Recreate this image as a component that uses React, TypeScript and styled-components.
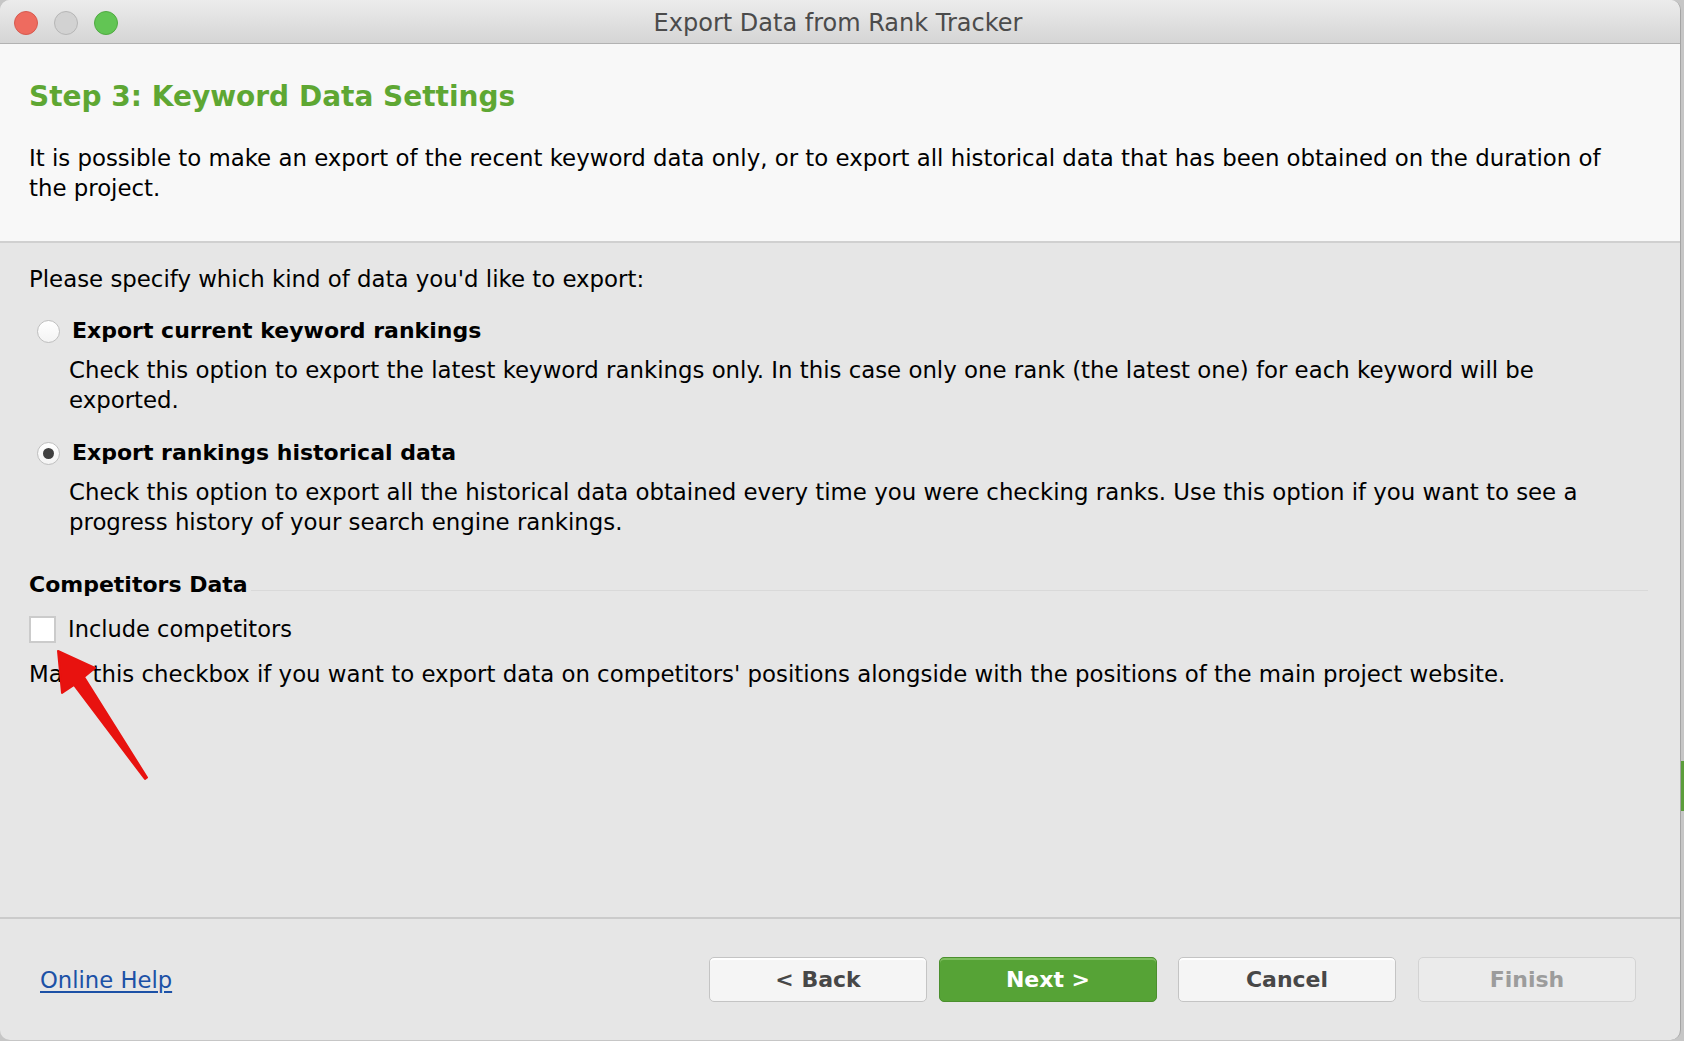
import React from "react";
import styled, { createGlobalStyle } from "styled-components";

const Global = createGlobalStyle`
  html, body { margin: 0; padding: 0; }
  body {
    width: 1684px;
    height: 1041px;
    overflow: hidden;
    background: linear-gradient(to bottom, #c6c6c6 0, #c6c6c6 761px, #5b9d3b 761px, #5b9d3b 811px, #c6c6c6 811px);
    font-family: "DejaVu Sans", "Noto Sans", sans-serif;
    color: #000;
  }
`;

const Window = styled.div`
  position: relative;
  box-sizing: border-box;
  width: 1681px;
  height: 1040px;
  display: flex;
  flex-direction: column;
  border-radius: 10px;
  overflow: hidden;
  background: #e6e6e6;
  border-right: 1px solid #a4a4a4;
`;

const TitleBar = styled.div`
  box-sizing: border-box;
  height: 44px;
  flex: none;
  display: grid;
  grid-template-columns: 1fr auto 1fr;
  align-items: center;
  background: linear-gradient(to bottom, #ececec, #d5d5d5);
  border-bottom: 1px solid #b2b2b2;
`;

const Lights = styled.div`
  display: flex;
  gap: 16px;
  padding: 2px 0 0 14px;
`;

const Light = styled.span<{ $fill: string; $edge: string }>`
  width: 24px;
  height: 24px;
  box-sizing: border-box;
  border-radius: 50%;
  background: ${(p) => p.$fill};
  border: 1px solid ${(p) => p.$edge};
`;

const WindowTitle = styled.div`
  font-size: 24px;
  color: #4b4b4b;
  white-space: nowrap;
  margin: 3px 4px 0 0;
`;

const Header = styled.div`
  flex: none;
  box-sizing: border-box;
  height: 199px;
  padding: 33px 51px 0 29px;
  background: #f8f8f8;
  border-bottom: 2px solid #d0d0d0;
`;

const Heading = styled.h1`
  margin: 0;
  font-size: 28px;
  line-height: 40px;
  font-weight: bold;
  color: #5ea733;
`;

const Para = styled.p<{ $indent?: number; $top?: number }>`
  margin: ${(p) => p.$top ?? 0}px 0 0 ${(p) => p.$indent ?? 0}px;
  font-size: 22.85px;
  line-height: 30px;
  color: #000;
`;

const Content = styled.div`
  flex: 1;
  padding: 21px 51px 0 29px;
`;

const OptionRow = styled.label<{ $top: number }>`
  display: flex;
  align-items: center;
  gap: 12px;
  height: 30px;
  margin: ${(p) => p.$top}px 0 0 8px;
`;

const Radio = styled.span<{ $on?: boolean }>`
  box-sizing: border-box;
  width: 23px;
  height: 23px;
  border-radius: 50%;
  background: linear-gradient(to bottom, #ffffff, #f4f4f4);
  border: 1px solid #bfbfbf;
  display: flex;
  align-items: center;
  justify-content: center;
  &::after {
    content: "";
    display: ${(p) => (p.$on ? "block" : "none")};
    width: 11px;
    height: 11px;
    border-radius: 50%;
    background: #404040;
  }
`;

const OptionLabel = styled.span`
  font-size: 22px;
  line-height: 30px;
  font-weight: bold;
`;

const SectionRow = styled.div`
  display: flex;
  align-items: center;
  height: 30px;
  margin-top: 32px;
`;

const SectionTitle = styled.span`
  font-size: 22px;
  font-weight: bold;
  white-space: nowrap;
`;

const SectionRule = styled.span`
  flex: none;
  width: 1397px;
  height: 1px;
  margin: 12px 0 0 3px;
  background: #d9d9d9;
`;

const CheckRow = styled.label`
  display: flex;
  align-items: center;
  gap: 12px;
  height: 30px;
  margin-top: 15px;
`;

const CheckBox = styled.span`
  box-sizing: border-box;
  width: 27px;
  height: 27px;
  background: #fff;
  border: 2px solid #cbcbcb;
`;

const CheckLabel = styled.span`
  font-size: 22.5px;
`;

const Footer = styled.div`
  flex: none;
  box-sizing: border-box;
  height: 123px;
  border-top: 2px solid #cbcbcb;
  display: flex;
  align-items: center;
  padding: 0 44px 0 40px;
`;

const HelpLink = styled.a`
  font-size: 22.7px;
  color: #1c51a6;
  text-decoration: underline;
  text-underline-offset: 3px;
  cursor: pointer;
`;

const Buttons = styled.div`
  margin-left: auto;
  display: flex;
`;

type Kind = "plain" | "primary" | "disabled";

const Button = styled.button<{ $kind: Kind; $gap?: number }>`
  box-sizing: border-box;
  width: 218px;
  height: 45px;
  margin-left: ${(p) => p.$gap ?? 0}px;
  border-radius: 5px;
  font-family: "DejaVu Sans", sans-serif;
  font-size: 22px;
  font-weight: bold;
  cursor: pointer;
  ${(p) =>
    p.$kind === "primary"
      ? `background: #56a336; color: #fff; border: 1px solid #4b8f2e; box-shadow: inset 0 2px 0 #7fbf60;`
      : p.$kind === "disabled"
      ? `background: #ebebeb; color: #9c9c9c; border: 1px solid #d3d3d3;`
      : `background: #f5f5f5; color: #474747; border: 1px solid #c4c4c4; box-shadow: inset 0 2px 0 #ffffff;`}
`;

const Overlay = styled.svg`
  position: absolute;
  left: 0;
  top: 0;
  width: 1680px;
  height: 1040px;
  pointer-events: none;
`;

export default function App() {
  return (
    <>
      <Global />
      <Window>
        <TitleBar>
          <Lights>
            <Light $fill="#ee6b5f" $edge="#d65a4f" />
            <Light $fill="#d2d2d2" $edge="#b6b6b6" />
            <Light $fill="#62c554" $edge="#50aa42" />
          </Lights>
          <WindowTitle>Export Data from Rank Tracker</WindowTitle>
          <span />
        </TitleBar>

        <Header>
          <Heading>Step 3: Keyword Data Settings</Heading>
          <Para $top={26}>
            It is possible to make an export of the recent keyword data only, or to export all historical data that
            has been obtained on the duration of the project.
          </Para>
        </Header>

        <Content>
          <Para>Please specify which kind of data you'd like to export:</Para>

          <OptionRow $top={22}>
            <Radio />
            <OptionLabel>Export current keyword rankings</OptionLabel>
          </OptionRow>
          <Para $indent={40} $top={9}>
            Check this option to export the latest keyword rankings only. In this case only one rank (the latest one)
            for each keyword will be exported.
          </Para>

          <OptionRow $top={23}>
            <Radio $on />
            <OptionLabel>Export rankings historical data</OptionLabel>
          </OptionRow>
          <Para $indent={40} $top={9}>
            Check this option to export all the historical data obtained every time you were checking ranks. Use this
            option if you want to see a progress history of your search engine rankings.
          </Para>

          <SectionRow>
            <SectionTitle>Competitors Data</SectionTitle>
            <SectionRule />
          </SectionRow>
          <CheckRow>
            <CheckBox />
            <CheckLabel>Include competitors</CheckLabel>
          </CheckRow>
          <Para $top={15}>
            Mark this checkbox if you want to export data on competitors' positions alongside with the positions of the
            main project website.
          </Para>
        </Content>

        <Footer>
          <HelpLink>Online Help</HelpLink>
          <Buttons>
            <Button $kind="plain">&lt; Back</Button>
            <Button $kind="primary" $gap={12}>
              Next &gt;
            </Button>
            <Button $kind="plain" $gap={21}>
              Cancel
            </Button>
            <Button $kind="disabled" $gap={22}>
              Finish
            </Button>
          </Buttons>
        </Footer>

        <Overlay viewBox="0 0 1680 1040">
          <path
            d="M58 651 L95 668 L84 677 L147 777.5 L145 779 L74 685 L62 693 Z"
            fill="#e8120f"
            stroke="#e8120f"
            strokeWidth="2"
            strokeLinejoin="round"
          />
        </Overlay>
      </Window>
    </>
  );
}
